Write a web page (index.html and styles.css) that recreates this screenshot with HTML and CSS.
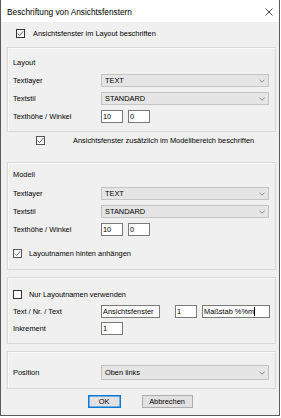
FILE: index.html
```html
<!DOCTYPE html>
<html lang="de">
<head>
<meta charset="utf-8">
<title>Beschriftung von Ansichtsfenstern</title>
<link rel="stylesheet" href="styles.css">
</head>
<body>
<div class="window">
  <div class="titlebar">
    <span class="title">Beschriftung von Ansichtsfenstern</span>
    <svg class="close" width="8" height="8" viewBox="0 0 8 8"><path d="M0.5 0.5 L7.5 7.5 M7.5 0.5 L0.5 7.5" stroke="#333" stroke-width="0.9" fill="none"/></svg>
  </div>
  <div class="client">
    <div class="check check-top">
      <span class="box"><svg width="9" height="9" viewBox="0 0 9 9"><path d="M1.8 4.6 L3.6 6.5 L7.3 2.2" stroke="#444" stroke-width="0.9" fill="none"/></svg></span>
      <span class="check-label">Ansichtsfenster im Layout beschriften</span>
    </div>

    <div class="group g-layout">
      <div class="group-title">Layout</div>
      <div class="row r-first">
        <span class="lbl">Textlayer</span>
        <div class="select"><span>TEXT</span><svg class="chev" width="6" height="4" viewBox="0 0 6 4"><path d="M0.5 0.8 L3 3.2 L5.5 0.8" stroke="#777" stroke-width="0.8" fill="none"/></svg></div>
      </div>
      <div class="row">
        <span class="lbl">Textstil</span>
        <div class="select"><span>STANDARD</span><svg class="chev" width="6" height="4" viewBox="0 0 6 4"><path d="M0.5 0.8 L3 3.2 L5.5 0.8" stroke="#777" stroke-width="0.8" fill="none"/></svg></div>
      </div>
      <div class="row">
        <span class="lbl">Texthöhe / Winkel</span>
        <div class="inputs">
          <div class="input w-s">10</div>
          <div class="input w-s">0</div>
        </div>
      </div>
    </div>

    <div class="check check-mid">
      <span class="box"><svg width="9" height="9" viewBox="0 0 9 9"><path d="M1.8 4.6 L3.6 6.5 L7.3 2.2" stroke="#555" stroke-width="0.9" fill="none"/></svg></span>
      <span class="check-label">Ansichtsfenster zusätzlich im Modellbereich beschriften</span>
    </div>

    <div class="group g-modell">
      <div class="group-title">Modell</div>
      <div class="row r-first2">
        <span class="lbl">Textlayer</span>
        <div class="select"><span>TEXT</span><svg class="chev" width="6" height="4" viewBox="0 0 6 4"><path d="M0.5 0.8 L3 3.2 L5.5 0.8" stroke="#777" stroke-width="0.8" fill="none"/></svg></div>
      </div>
      <div class="row">
        <span class="lbl">Textstil</span>
        <div class="select"><span>STANDARD</span><svg class="chev" width="6" height="4" viewBox="0 0 6 4"><path d="M0.5 0.8 L3 3.2 L5.5 0.8" stroke="#777" stroke-width="0.8" fill="none"/></svg></div>
      </div>
      <div class="row">
        <span class="lbl">Texthöhe / Winkel</span>
        <div class="inputs">
          <div class="input w-s">10</div>
          <div class="input w-s">0</div>
        </div>
      </div>
      <div class="check check-in">
        <span class="box"><svg width="9" height="9" viewBox="0 0 9 9"><path d="M1.8 4.6 L3.6 6.5 L7.3 2.2" stroke="#555" stroke-width="0.9" fill="none"/></svg></span>
        <span class="check-label">Layoutnamen hinten anhängen</span>
      </div>
    </div>

    <div class="group g-text">
      <div class="check check-in2">
        <span class="box"></span>
        <span class="check-label">Nur Layoutnamen verwenden</span>
      </div>
      <div class="row r-text">
        <span class="lbl">Text / Nr. / Text</span>
        <div class="inputs">
          <div class="input w-l">Ansichtsfenster</div>
          <div class="input w-s nr">1</div>
          <div class="input w-m">Maßstab %%m<span class="caret"></span></div>
        </div>
      </div>
      <div class="row r-ink">
        <span class="lbl">Inkrement</span>
        <div class="inputs">
          <div class="input w-s">1</div>
        </div>
      </div>
    </div>

    <div class="group g-pos">
      <div class="row r-pos">
        <span class="lbl">Position</span>
        <div class="select tall"><span>Oben links</span><svg class="chev" width="6" height="4" viewBox="0 0 6 4"><path d="M0.5 0.8 L3 3.2 L5.5 0.8" stroke="#777" stroke-width="0.8" fill="none"/></svg></div>
      </div>
    </div>

    <div class="buttons">
      <div class="btn btn-default">OK</div>
      <div class="btn">Abbrechen</div>
    </div>
  </div>
</div>
</body>
</html>
```

FILE: styles.css
```css
* { box-sizing: border-box; }

html, body {
  margin: 0;
  padding: 0;
  background: #ffffff;
}

body {
  font-family: "Liberation Sans", Arial, sans-serif;
  font-size: 7.4px;
  color: #000;
}

.window {
  width: 280px;
  height: 416px;
  border-left: 1px solid #5a5a5a;
  border-right: 1px solid #5a5a5a;
  border-bottom: 1px solid #5a5a5a;
  display: flex;
  flex-direction: column;
  background: #f0f0f0;
}

.titlebar {
  height: 22px;
  background: #fff;
  display: flex;
  align-items: center;
  justify-content: space-between;
  padding: 0 6px 0 6px;
  flex-shrink: 0;
}

.title {
  font-size: 8.3px;
  line-height: 10px;
  padding-top: 1px;
}

.close {
  display: block;
  margin-right: 0;
  margin-top: 1px;
}

.client {
  flex: 1;
  display: flex;
  flex-direction: column;
}

/* checkboxes */
.check {
  display: flex;
  align-items: center;
  height: 9px;
}

.box {
  width: 9px;
  height: 9px;
  border: 1px solid #333;
  background: #fff;
  flex-shrink: 0;
  position: relative;
}

.box svg {
  position: absolute;
  left: -1px;
  top: -1px;
}

.check-label {
  line-height: 10px;
  white-space: nowrap;
}

.check-top { margin: 7px 0 0 15px; }
.check-top .check-label { margin-left: 8px; }

.check-mid { margin: 4px 0 0 35px; }
.check-mid .box { border-color: #555; }
.check-mid .check-label { margin-left: 28px; }

.check-in { margin-top: 13px; }
.check-in .box { border-color: #555; }
.check-in .check-label { margin-left: 7px; }

.check-in2 .check-label { margin-left: 7px; }

/* groups */
.group {
  width: 269px;
  margin-left: 6px;
  border: 1px solid #d8d8d8;
  box-shadow: inset 1px 1px 0 #fafafa;
  padding: 0 6px 0 5px;
  display: flex;
  flex-direction: column;
}

.group-title {
  line-height: 10px;
  height: 10px;
}

.g-layout { margin-top: 9px; padding-top: 10px; padding-bottom: 8px; }
.g-modell { margin-top: 17px; padding-top: 7px; padding-bottom: 11px; }
.g-text { margin-top: 7px; padding-top: 12px; padding-bottom: 8px; }
.g-pos { margin-top: 7px; padding-top: 13px; padding-bottom: 8px; }

.row {
  display: flex;
  align-items: center;
  margin-top: 5px;
}

.r-first { margin-top: 6px; }
.r-first2 { margin-top: 7px; }
.r-text { margin-top: 6px; }
.r-ink { margin-top: 4px; }
.r-pos { margin-top: 0; }

.lbl {
  width: 88px;
  flex-shrink: 0;
  line-height: 10px;
  white-space: nowrap;
}

.select {
  width: 168px;
  height: 13px;
  background: #e5e5e5;
  border: 1px solid #c4c4c4;
  display: flex;
  align-items: center;
  justify-content: space-between;
  padding: 0 3px 0 3px;
}

.select.tall { height: 15px; }

.select span {
  line-height: 10px;
}

.chev { display: block; margin-right: 0; }

.inputs {
  display: flex;
  gap: 5px;
}

.input {
  height: 13px;
  background: #fff;
  border: 1px solid #7a7a7a;
  line-height: 11px;
  padding-left: 1px;
  white-space: nowrap;
  display: flex;
  align-items: center;
}

.w-s { width: 22px; }
.w-l { width: 59px; }
.w-m { width: 68px; }
.nr { margin-left: 10px; }

.caret {
  display: inline-block;
  width: 1px;
  height: 9px;
  background: #000;
  margin-left: 0;
}

/* buttons */
.buttons {
  display: flex;
  justify-content: center;
  gap: 21px;
  margin-top: 6px;
}

.btn {
  height: 13px;
  width: 51px;
  background: #e1e1e1;
  border: 1px solid #adadad;
  display: flex;
  align-items: center;
  justify-content: center;
  line-height: 10px;
}

.btn-default {
  width: 33px;
  border-color: #0078d7;
  box-shadow: inset 0 0 0 0.5px #0078d7;
}
```
